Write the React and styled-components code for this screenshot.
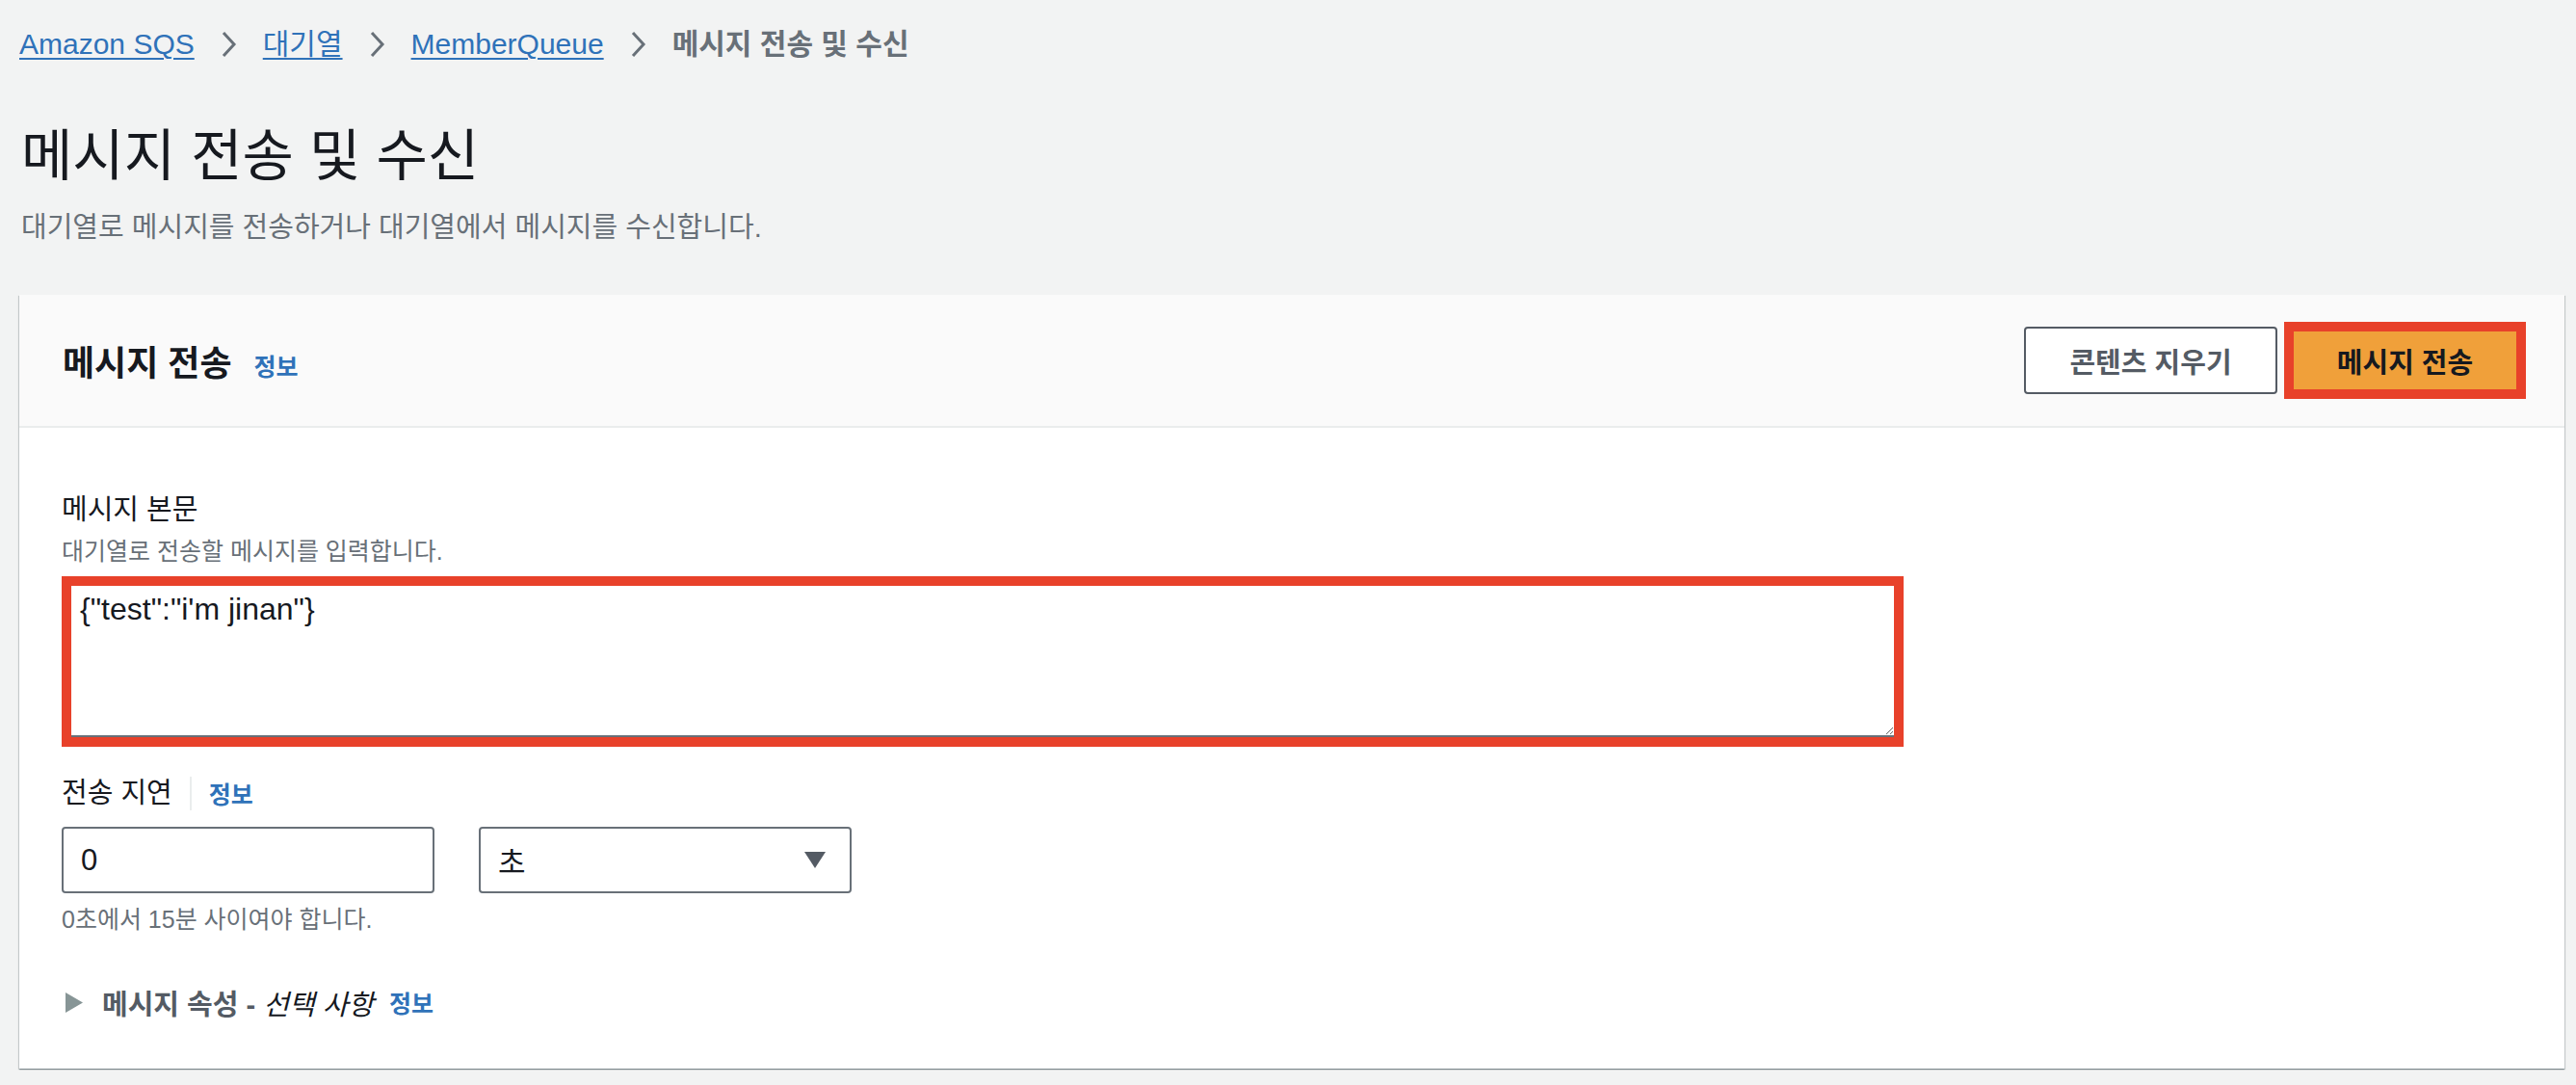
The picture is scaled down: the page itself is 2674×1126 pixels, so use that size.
import React from 'react'
import styled, { createGlobalStyle } from 'styled-components'

const GlobalStyle = createGlobalStyle`
    html, body {
        margin: 0;
        padding: 0;
        background: #f2f3f3;
    }
    body {
        font-family: "Liberation Sans", "Noto Sans CJK KR", sans-serif;
        color: #16191f;
    }
    * {
        box-sizing: border-box;
    }
`

const Page = styled.div`
    padding: 26px 12px 0 20px;
    min-height: 1126px;
`

const Breadcrumbs = styled.nav`
    display: flex;
    align-items: center;
    height: 40px;
    font-size: 30px;
    line-height: 40px;
`

const Crumb = styled.a`
    color: #2f72b9;
    text-decoration: underline;
    text-decoration-thickness: 2px;
    text-underline-offset: 4px;
    cursor: pointer;
`

const CurrentCrumb = styled.span`
    color: #687078;
    font-weight: 700;
`

const Sep = styled.span`
    display: flex;
    align-items: center;
    margin: 0 26px;
`

const Title = styled.h1`
    margin: 60px 0 0 2px;
    font-size: 58px;
    line-height: 72px;
    font-weight: 400;
    color: #16191f;
`

const Subtitle = styled.p`
    margin: 20px 0 0 2px;
    font-size: 29px;
    line-height: 36px;
    color: #687078;
`

const Card = styled.section`
    margin-top: 52px;
    background: #fff;
    box-shadow: 0 1px 1px 0 rgba(0, 28, 36, 0.3), 1px 1px 1px 0 rgba(0, 28, 36, 0.15), -1px 1px 1px 0 rgba(0, 28, 36, 0.15);
`

const CardHeader = styled.header`
    display: flex;
    align-items: center;
    justify-content: space-between;
    height: 138px;
    padding: 0 40px 0 45px;
    background: #fafafa;
    border-bottom: 2px solid #eaeded;
`

const HeaderTitle = styled.h2`
    display: flex;
    align-items: baseline;
    margin: 0;
    font-size: 36px;
    font-weight: 700;
    color: #16191f;
`

const Info = styled.a`
    margin-left: ${p => p.gap ?? 16}px;
    font-size: 25px;
    font-weight: 700;
    color: #2f72b9;
    cursor: pointer;
`

const Actions = styled.div`
    display: flex;
    align-items: center;
    gap: 7px;
`

const Button = styled.button`
    display: flex;
    align-items: center;
    justify-content: center;
    font-family: inherit;
    font-size: 29px;
    font-weight: 700;
    cursor: pointer;
`

const NormalButton = styled(Button)`
    width: 263px;
    height: 70px;
    border: 2px solid #545b64;
    border-radius: 4px;
    background: #fff;
    color: #545b64;
`

const PrimaryButton = styled(Button)`
    width: 251px;
    height: 80px;
    border: 10px solid #e8412a;
    background: #f0a03a;
    color: #16191f;
`

const CardBody = styled.div`
    padding: 65px 44px 49px 44px;
`

const Label = styled.div`
    font-size: 29px;
    line-height: 40px;
    color: #16191f;
`

const Description = styled.div`
    margin-top: 8px;
    font-size: 25px;
    line-height: 30px;
    color: #687078;
`

const Highlight = styled.div`
    margin-top: 11px;
    width: 1912px;
    height: 177px;
    border: 10px solid #e8412a;
`

const TextArea = styled.textarea`
    display: block;
    width: 100%;
    height: 100%;
    margin: 0;
    padding: 4px 9px;
    border: none;
    border-bottom: 2px solid #687078;
    outline: none;
    resize: vertical;
    font-family: inherit;
    font-size: 32px;
    line-height: 40px;
    color: #16191f;
    background: #fff;
`

const LabelRow = styled.div`
    display: flex;
    align-items: center;
    margin-top: 28px;
    height: 40px;
`

const Divider = styled.span`
    width: 2px;
    height: 35px;
    margin: 0 18px 0 18px;
    background: #eaeded;
`

const InputRow = styled.div`
    display: flex;
    gap: 46px;
    margin-top: 15px;
`

const Box = styled.div`
    display: flex;
    align-items: center;
    justify-content: space-between;
    width: 387px;
    height: 69px;
    padding: 0 25px 0 18px;
    border: 2px solid #687078;
    border-radius: 4px;
    background: #fff;
    font-size: 31px;
    color: #16191f;
`

const Hint = styled.div`
    margin-top: 12px;
    font-size: 25px;
    line-height: 30px;
    color: #687078;
`

const Expander = styled.div`
    display: flex;
    align-items: center;
    margin-top: 51px;
    height: 40px;
    padding-left: 4px;
`

const ExpanderText = styled.span`
    margin-left: 20px;
    font-size: 29px;
    font-weight: 700;
    color: #545b64;

    em {
        font-style: italic;
        font-weight: 400;
        color: #16191f;
    }
`

const Chevron = () => (
    <svg width="19" height="30" viewBox="0 0 19 30">
        <polyline points="4,3 15,15 4,27" fill="none" stroke="#687078" strokeWidth="3" />
    </svg>
)

const CaretDown = () => (
    <svg width="22" height="17" viewBox="0 0 22 17">
        <polygon points="0,0 22,0 11,17" fill="#545b64" />
    </svg>
)

const CaretRight = () => (
    <svg width="18" height="21" viewBox="0 0 18 21">
        <polygon points="0,0 18,10.5 0,21" fill="#879596" />
    </svg>
)

const crumbs = ['Amazon SQS', '대기열', 'MemberQueue']

export default function App() {
    return (
        <Page>
            <GlobalStyle />
            <Breadcrumbs>
                {crumbs.map(c => (
                    <React.Fragment key={c}>
                        <Crumb>{c}</Crumb>
                        <Sep><Chevron /></Sep>
                    </React.Fragment>
                ))}
                <CurrentCrumb>메시지 전송 및 수신</CurrentCrumb>
            </Breadcrumbs>

            <Title>메시지 전송 및 수신</Title>
            <Subtitle>대기열로 메시지를 전송하거나 대기열에서 메시지를 수신합니다.</Subtitle>

            <Card>
                <CardHeader>
                    <HeaderTitle>
                        메시지 전송
                        <Info gap={23}>정보</Info>
                    </HeaderTitle>
                    <Actions>
                        <NormalButton>콘텐츠 지우기</NormalButton>
                        <PrimaryButton>메시지 전송</PrimaryButton>
                    </Actions>
                </CardHeader>

                <CardBody>
                    <Label>메시지 본문</Label>
                    <Description>대기열로 전송할 메시지를 입력합니다.</Description>
                    <Highlight>
                        <TextArea defaultValue={'{"test":"i\'m jinan"}'} />
                    </Highlight>

                    <LabelRow>
                        <Label>전송 지연</Label>
                        <Divider />
                        <Info gap={0}>정보</Info>
                    </LabelRow>
                    <InputRow>
                        <Box>0</Box>
                        <Box>
                            초
                            <CaretDown />
                        </Box>
                    </InputRow>
                    <Hint>0초에서 15분 사이여야 합니다.</Hint>

                    <Expander>
                        <CaretRight />
                        <ExpanderText>메시지 속성 - <em>선택 사항</em></ExpanderText>
                        <Info gap={16}>정보</Info>
                    </Expander>
                </CardBody>
            </Card>
        </Page>
    )
}
